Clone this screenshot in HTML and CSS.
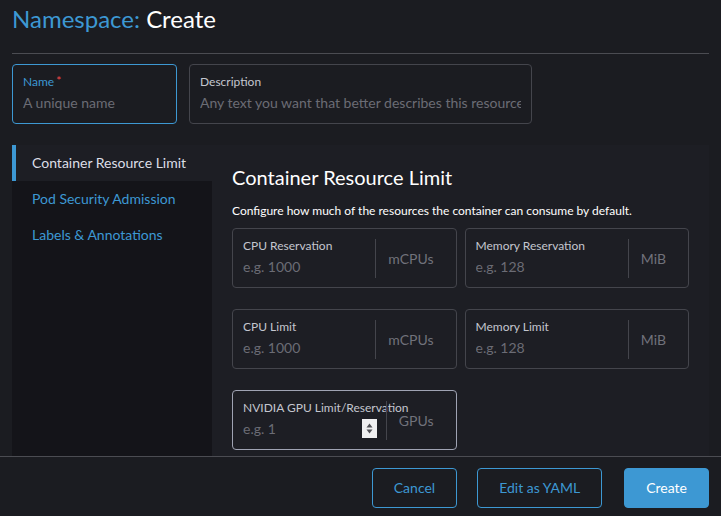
FILE: index.html
```html
<!DOCTYPE html>
<html lang="en">
<head>
<meta charset="utf-8">
<title>Namespace: Create</title>
<link rel="stylesheet" href="styles.css">
</head>
<body>
<div class="app">
  <div class="content">
    <h1 class="title"><span class="title-type">Namespace:</span> <span class="title-mode">Create</span></h1>
    <hr class="divider">
    <div class="name-row">
      <div class="field field-name focused">
        <label class="field-label label-blue">Name <span class="required">*</span></label>
        <div class="field-input placeholder">A unique name</div>
      </div>
      <div class="field field-desc">
        <label class="field-label">Description</label>
        <div class="field-input placeholder">Any text you want that better describes this resource</div>
      </div>
    </div>

    <div class="tabbed">
      <ul class="side-tabs">
        <li class="tab active">Container Resource Limit</li>
        <li class="tab">Pod Security Admission</li>
        <li class="tab">Labels &amp; Annotations</li>
      </ul>
      <div class="tab-panel">
        <h3 class="panel-title">Container Resource Limit</h3>
        <p class="panel-desc">Configure how much of the resources the container can consume by default.</p>
        <div class="grid">
          <div class="field unit-field">
            <div class="unit-main">
              <label class="field-label">CPU Reservation</label>
              <div class="field-input placeholder">e.g. 1000</div>
            </div>
            <div class="suffix">mCPUs</div>
          </div>
          <div class="field unit-field">
            <div class="unit-main">
              <label class="field-label">Memory Reservation</label>
              <div class="field-input placeholder">e.g. 128</div>
            </div>
            <div class="suffix">MiB</div>
          </div>
          <div class="field unit-field">
            <div class="unit-main">
              <label class="field-label">CPU Limit</label>
              <div class="field-input placeholder">e.g. 1000</div>
            </div>
            <div class="suffix">mCPUs</div>
          </div>
          <div class="field unit-field">
            <div class="unit-main">
              <label class="field-label">Memory Limit</label>
              <div class="field-input placeholder">e.g. 128</div>
            </div>
            <div class="suffix">MiB</div>
          </div>
          <div class="field unit-field hovered">
            <div class="unit-main">
              <label class="field-label nowrap">NVIDIA GPU Limit/Reservation</label>
              <div class="field-input input-row">
                <span class="placeholder">e.g. 1</span>
                <svg class="spinner" width="15" height="19" viewBox="0 0 15 19" aria-hidden="true">
                  <rect x="0" y="0" width="15" height="19" fill="#efeff0"/>
                  <path d="M4.5 8.5 L7.5 4.5 L10.5 8.5 Z" fill="#505055"/>
                  <path d="M4.5 10.5 L7.5 14.5 L10.5 10.5 Z" fill="#505055"/>
                </svg>
              </div>
            </div>
            <div class="suffix">GPUs</div>
          </div>
        </div>
      </div>
    </div>
  </div>

  <footer class="footer">
    <button class="btn btn-outline btn-cancel">Cancel</button>
    <button class="btn btn-outline btn-yaml">Edit as YAML</button>
    <button class="btn btn-primary">Create</button>
  </footer>
</div>
</body>
</html>
```

FILE: styles.css
```css
* { box-sizing: border-box; }

html, body {
  margin: 0;
  padding: 0;
  height: 100%;
}

body {
  background: #1b1c21;
  color: #dcdee7;
  font-family: Lato, "Noto Sans", sans-serif;
}

.app {
  display: flex;
  flex-direction: column;
  height: 100vh;
}

.content {
  flex: 1;
  overflow: hidden;
  padding: 0 12px;
  display: flex;
  flex-direction: column;
}

.title {
  margin: 0;
  padding-top: 4px;
  font-size: 24px;
  line-height: 29px;
  font-weight: 400;
}

.title-type { color: #3d98d3; }
.title-mode { color: #ffffff; }

.divider {
  margin: 20px 0 0;
  border: 0;
  border-top: 1px solid #4b4c52;
  height: 0;
}

.name-row {
  display: flex;
  gap: 12px;
  margin-top: 10px;
}

.field {
  height: 60px;
  border: 1px solid #44454c;
  border-radius: 4px;
  background: #1b1c21;
}

.field-name { width: 165px; padding: 10px 10px 0; }
.field-desc { width: 343px; padding: 10px 10px 0; overflow: hidden; }

.field.focused { border-color: #3d98d3; }
.field.hovered { border-color: #9fa3b3; }

.field-label {
  display: block;
  font-size: 12px;
  line-height: 14px;
  color: #c4c6cf;
}

.label-blue { color: #3d98d3; }

.required {
  color: #f64747;
  position: relative;
  top: -1px;
  margin-left: -1px;
}

.nowrap { white-space: nowrap; }

.field-input {
  margin-top: 5px;
  font-size: 14px;
  line-height: 17px;
  white-space: nowrap;
  overflow: hidden;
}

.placeholder { color: #6b6c75; }

.tabbed {
  flex: 1;
  display: flex;
  margin-top: 21px;
  min-height: 0;
}

.side-tabs {
  list-style: none;
  margin: 0;
  padding: 0;
  width: 200px;
  flex: none;
  background: #141419;
}

.tab {
  height: 36px;
  line-height: 36px;
  padding-left: 20px;
  font-size: 14px;
  color: #3d98d3;
  white-space: nowrap;
}

.tab.active {
  background: #1d1e24;
  border-left: 4px solid #3d98d3;
  padding-left: 16px;
  color: #dcdee7;
}

.tab-panel {
  flex: 1;
  min-width: 0;
  background: #1d1e24;
  padding: 20px 20px 0;
  overflow: hidden;
}

.panel-title {
  margin: 0;
  font-size: 20px;
  line-height: 24px;
  font-weight: 400;
  color: #ffffff;
}

.panel-desc {
  margin: 15px 0 0;
  font-size: 12px;
  line-height: 14px;
  color: #ffffff;
}

.grid {
  display: grid;
  grid-template-columns: repeat(2, minmax(0, 1fr));
  column-gap: 8px;
  row-gap: 21px;
  margin-top: 10px;
}

.unit-field {
  display: flex;
  background: transparent;
}

.unit-main {
  flex: 1;
  min-width: 0;
  padding: 10px 10px 0;
}

.input-row {
  display: flex;
  align-items: center;
  justify-content: space-between;
  overflow: visible;
}

.spinner {
  display: block;
  margin-top: -1px;
  margin-bottom: -1px;
  margin-right: -1px;
}

.suffix {
  flex: none;
  margin: 10px 0 9px;
  border-left: 1px solid #44454c;
  padding: 0 22px 0 12px;
  display: flex;
  align-items: center;
  font-size: 14px;
  color: #71727b;
}

.footer {
  flex: none;
  height: 60px;
  border-top: 1px solid #4b4c52;
  display: flex;
  justify-content: flex-end;
  align-items: flex-start;
  padding: 11px 12px 0;
}

.btn {
  height: 40px;
  padding: 0 21px;
  border-radius: 4px;
  font-family: Lato, "Noto Sans", sans-serif;
  font-size: 14px;
  line-height: 38px;
  cursor: pointer;
}

.btn-outline {
  background: transparent;
  border: 1px solid #3d98d3;
  color: #3d98d3;
}

.btn-cancel { margin-right: 20px; }
.btn-yaml { margin-right: 22px; }

.btn-primary {
  background: #3d98d3;
  border: 1px solid #3d98d3;
  color: #ffffff;
}
```
